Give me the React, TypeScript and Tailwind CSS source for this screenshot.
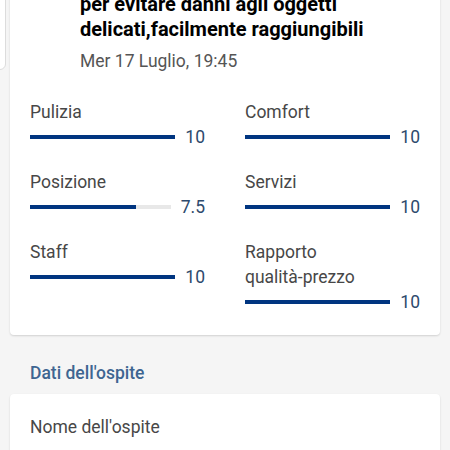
import React from "react";

type Item = { label: React.ReactNode; value: number; display: string };

const left: Item[] = [
  { label: "Pulizia", value: 10, display: "10" },
  { label: "Posizione", value: 7.5, display: "7.5" },
  { label: "Staff", value: 10, display: "10" },
];
const right: Item[] = [
  { label: "Comfort", value: 10, display: "10" },
  { label: "Servizi", value: 10, display: "10" },
  { label: <>Rapporto<br />qualità-prezzo</>, value: 10, display: "10" },
];

function Rating({ item }: { item: Item }) {
  return (
    <div className="flex flex-col">
      <div className="text-[17.5px] leading-[25px] text-[#474747]">{item.label}</div>
      <div className="flex h-[24px] w-[175px] items-center">
        <div className="relative h-[4px] flex-1 bg-[#e8e8e8]">
          <div
            className="absolute left-0 top-0 h-full bg-[#003580]"
            style={{ width: `${(item.value / 10) * 100}%` }}
          />
        </div>
        <div className="ml-[10px] text-right text-[17.5px] leading-[24px] text-[#2d4a6d]">
          {item.display}
        </div>
      </div>
    </div>
  );
}

export default function App() {
  const rows = [0, 1, 2];
  return (
    <div
      className="relative h-[450px] w-[450px] overflow-hidden bg-[#f5f5f5]"
      style={{ fontFamily: "Roboto, 'Noto Sans', sans-serif" }}
    >
      <div className="absolute left-[-20px] top-[-10px] h-[80px] w-[26px] rounded-br-[6px] border border-[#dcdcdc] bg-white" />
      <div className="relative mx-[10px] -mt-[19px] rounded-[4px] bg-white pt-[11px] pb-[21px] shadow-[0_1px_2px_rgba(0,0,0,0.15)]">
        <div className="ml-[70px]">
          <div className="text-[20px] font-bold leading-[25px] text-black">
            per evitare danni agli oggetti
            <br />
            delicati,facilmente raggiungibili
          </div>
          <div className="mt-[7px] text-[17.5px] leading-[24px] text-[#555555]">
            Mer 17 Luglio, 19:45
          </div>
        </div>
        <div className="mt-[27px] grid grid-cols-[215px_175px] gap-y-[21px] pl-[20px]">
          {rows.map((i) => (
            <React.Fragment key={i}>
              <Rating item={left[i]} />
              <Rating item={right[i]} />
            </React.Fragment>
          ))}
        </div>
      </div>
      <div className="mt-[26px] pl-[30px] text-[17.5px] font-medium leading-[24px] text-[#3e6591]">
        Dati dell'ospite
      </div>
      <div className="mx-[10px] mt-[9px] h-[80px] rounded-[4px] bg-white pt-[21px] pl-[20px] shadow-[0_1px_2px_rgba(0,0,0,0.15)]">
        <div className="text-[17.5px] leading-[24px] text-[#474747]">Nome dell'ospite</div>
      </div>
    </div>
  );
}
